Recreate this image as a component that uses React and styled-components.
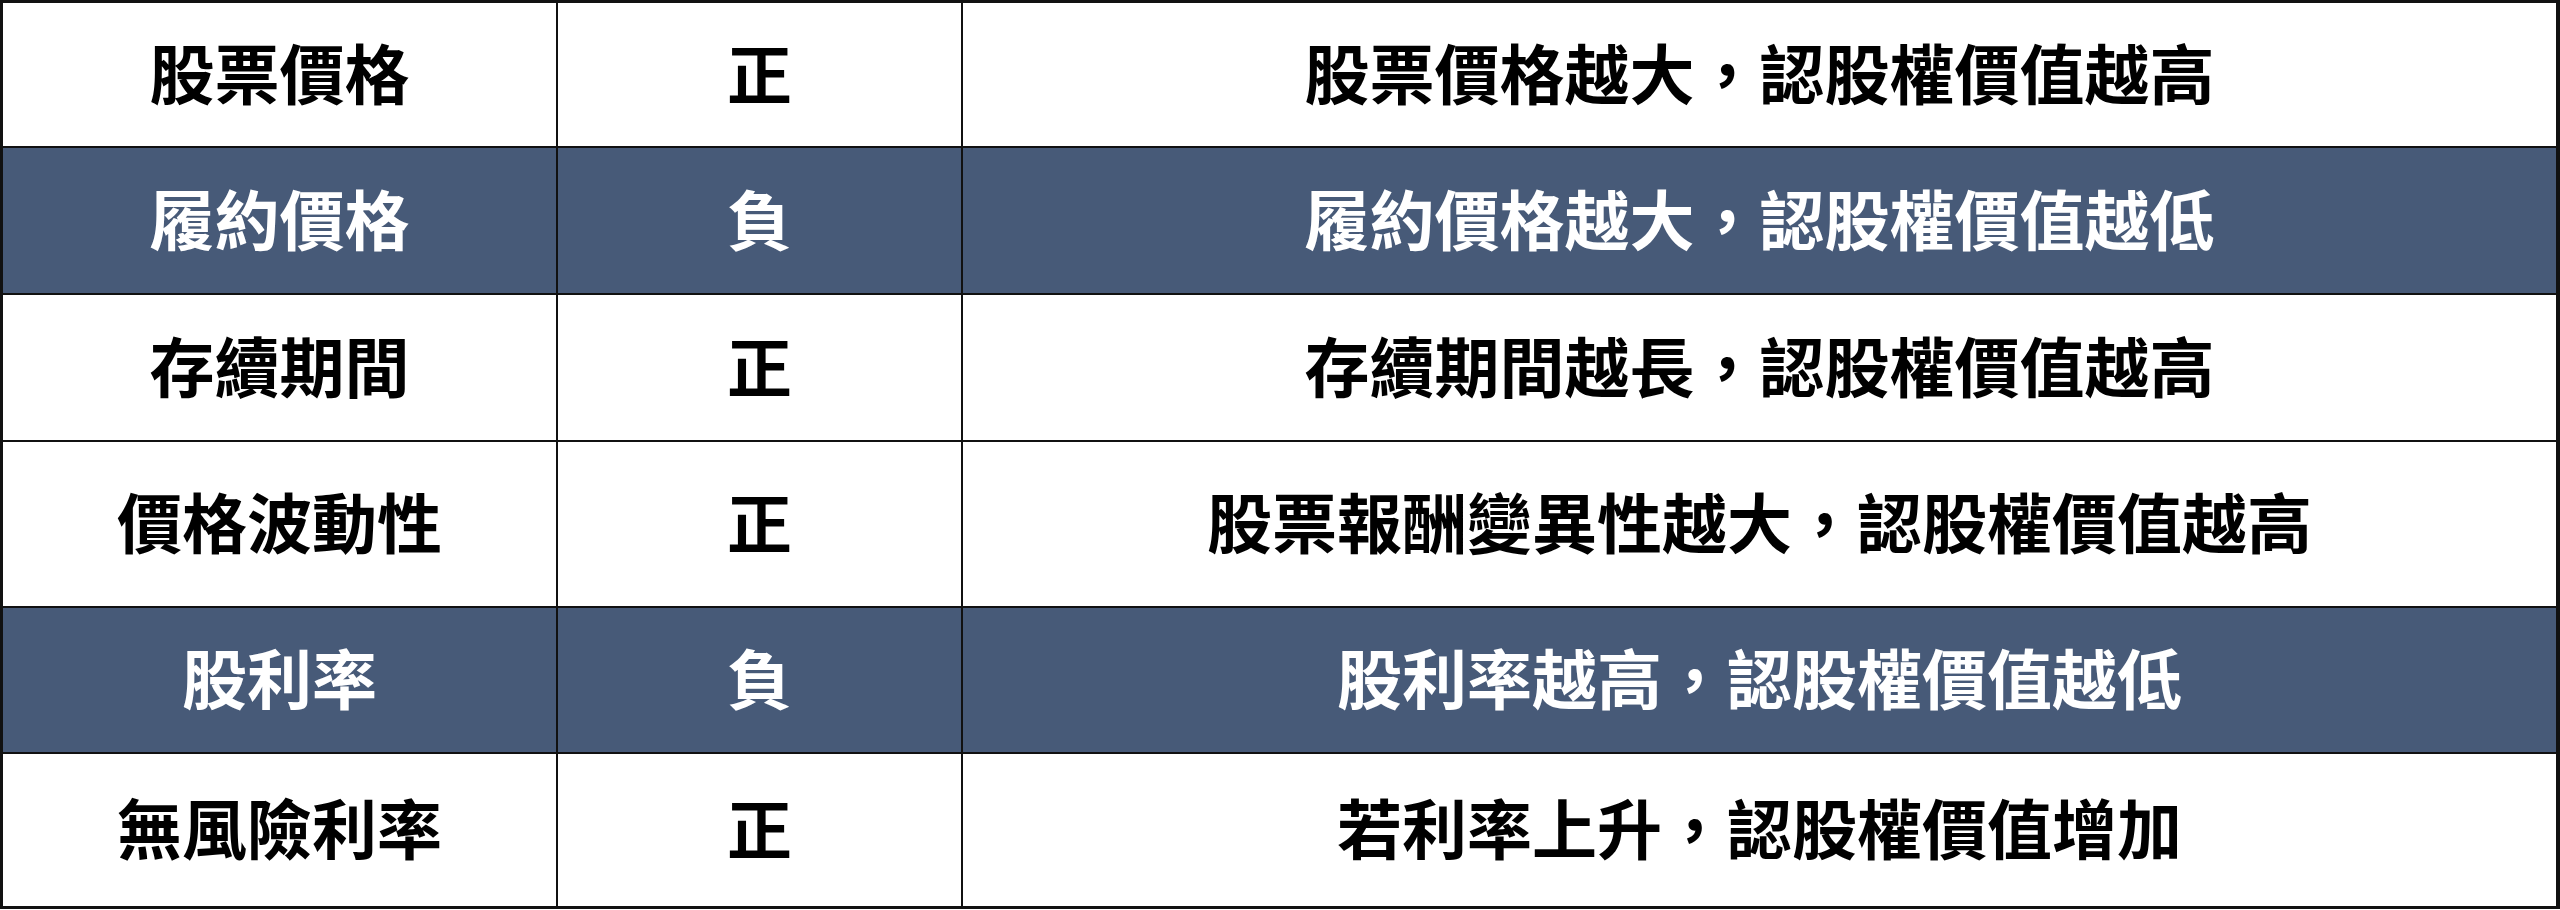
import React from "react";
import styled, { createGlobalStyle } from "styled-components";

const rows = [
  { factor: "股票價格", sign: "正", effect: "股票價格越大，認股權價值越高", h: 145 },
  { factor: "履約價格", sign: "負", effect: "履約價格越大，認股權價值越低", h: 147, dark: true },
  { factor: "存續期間", sign: "正", effect: "存續期間越長，認股權價值越高", h: 147 },
  { factor: "價格波動性", sign: "正", effect: "股票報酬變異性越大，認股權價值越高", h: 166 },
  { factor: "股利率", sign: "負", effect: "股利率越高，認股權價值越低", h: 146, dark: true },
  { factor: "無風險利率", sign: "正", effect: "若利率上升，認股權價值增加", h: 152, last: true },
];

const GlobalStyle = createGlobalStyle`
  html, body {
    margin: 0;
    padding: 0;
    background: #ffffff;
  }
`;

const Table = styled.div`
  box-sizing: border-box;
  width: 2560px;
  display: grid;
  grid-template-columns: 555px 405px 1fr;
  border-top: 3px solid #111;
  border-left: 3px solid #111;
  border-right: 4px solid #111;
  border-bottom: 3px solid #111;
  font-family: "Noto Sans CJK TC", "Noto Sans CJK SC", sans-serif;
  font-weight: 700;
  font-size: 65px;
`;

const Cell = styled.div`
  box-sizing: border-box;
  height: ${(p) => p.$h}px;
  padding-bottom: 7px;
  display: flex;
  align-items: center;
  justify-content: center;
  background: ${(p) => (p.$dark ? "#475a78" : "#ffffff")};
  color: ${(p) => (p.$dark ? "#ffffff" : "#000000")};
  border-right: ${(p) => (p.$edge ? "none" : "2px solid #111")};
  border-bottom: ${(p) => (p.$last ? "none" : "2px solid #111")};
  white-space: nowrap;
  line-height: 1;
`;

export default function App() {
  return (
    <>
      <GlobalStyle />
      <Table>
        {rows.map((r) => (
          <React.Fragment key={r.factor}>
            <Cell $h={r.h} $dark={r.dark} $last={r.last}>{r.factor}</Cell>
            <Cell $h={r.h} $dark={r.dark} $last={r.last}>{r.sign}</Cell>
            <Cell $h={r.h} $dark={r.dark} $last={r.last} $edge>{r.effect}</Cell>
          </React.Fragment>
        ))}
      </Table>
    </>
  );
}
